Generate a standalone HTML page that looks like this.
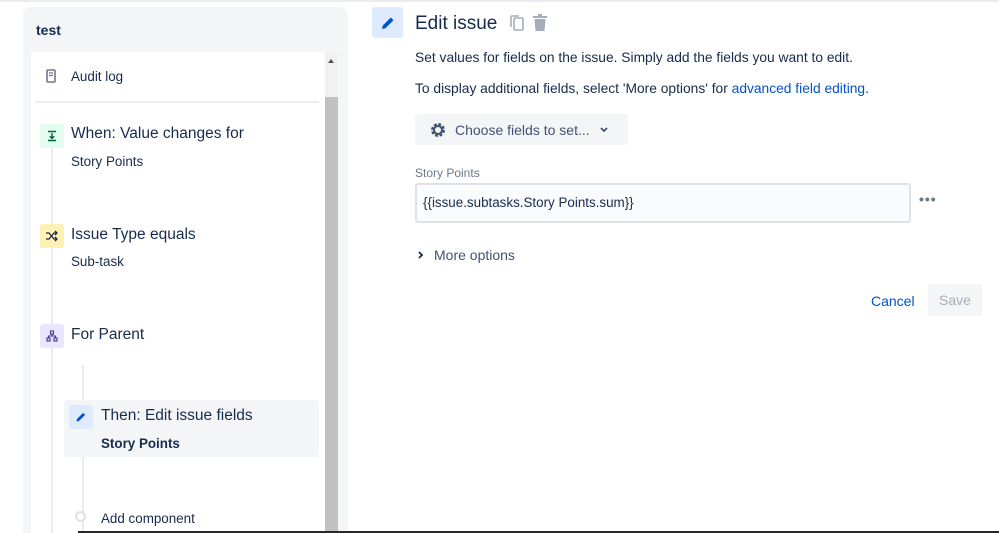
<!DOCTYPE html>
<html style="width:999px;height:533px;overflow:hidden"><head><meta charset="utf-8"><style>
*{box-sizing:border-box;margin:0;padding:0}
body{width:999px;height:533px;overflow:hidden;background:#fff;font-family:"Liberation Sans",sans-serif;color:#172b4d;position:relative}
.a{position:absolute}
.ic{position:absolute;width:24px;height:24px;border-radius:3px;display:flex;align-items:center;justify-content:center}
.t{position:absolute;font-size:15.5px;color:#172b4d}
.s{position:absolute;font-size:13.4px;color:#172b4d}
</style></head><body>
<div class="a" style="left:0;top:0;width:999px;height:2px;background:#ebecf0"></div>
<div class="a" style="left:23px;top:7px;width:325px;height:540px;background:#f4f5f7;border-radius:8px"></div>
<div class="a" style="left:36px;top:22px;font-size:14px;font-weight:bold">test</div>
<div class="a" style="left:31px;top:52px;width:294px;height:490px;background:#fff"></div>
<div class="a" style="left:325px;top:52px;width:13px;height:490px;background:#f1f1f1"></div>
<div class="a" style="left:325px;top:97px;width:13px;height:440px;background:#c1c1c1"></div>
<div class="a" style="left:328px;top:59px;width:0;height:0;border-left:3.5px solid transparent;border-right:3.5px solid transparent;border-bottom:4px solid #505050"></div>
<svg class="a" style="left:46px;top:69px" width="10" height="14" viewBox="0 0 10 14"><rect x="1" y="1" width="8" height="12" rx="1" fill="none" stroke="#6b778c" stroke-width="1.6"/><path d="M3 4h4M3 6.5h4" stroke="#6b778c" stroke-width="1.2"/></svg>
<div class="s" style="left:71px;top:69px">Audit log</div>
<div class="a" style="left:35px;top:101px;width:284px;height:2px;background:#ebecf0"></div>
<div class="a" style="left:51px;top:148px;width:2px;height:390px;background:#ebecf0"></div>
<div class="a" style="left:82px;top:365px;width:2px;height:170px;background:#ebecf0"></div>
<div class="ic" style="left:40px;top:124px;background:#e3fcef"><svg width="12" height="12" viewBox="0 0 12 12"><path d="M2 1.5h8M2 10.5h8M6 3v5.5M3.8 6.3L6 8.5l2.2-2.2" stroke="#006644" stroke-width="1.4" fill="none"/></svg></div>
<div class="t" style="left:71px;top:125px">When: Value changes for</div>
<div class="s" style="left:71px;top:154px">Story Points</div>
<div class="ic" style="left:40px;top:224px;background:#fff0b3"><svg width="14" height="12" viewBox="0 0 14 12"><path d="M1 3h3l5 6h3M1 9h3l5-6h3M10 1l2 2-2 2M10 7l2 2-2 2" stroke="#172b4d" stroke-width="1.3" fill="none"/></svg></div>
<div class="t" style="left:71px;top:226px">Issue Type equals</div>
<div class="s" style="left:71px;top:254px">Sub-task</div>
<div class="ic" style="left:40px;top:324px;background:#eae6ff"><svg width="12" height="12" viewBox="0 0 12 12"><rect x="4.5" y="1" width="3" height="3" fill="none" stroke="#403294" stroke-width="1.1"/><rect x="1" y="8" width="3" height="3" fill="none" stroke="#403294" stroke-width="1.1"/><rect x="8" y="8" width="3" height="3" fill="none" stroke="#403294" stroke-width="1.1"/><path d="M6 4v2M2.5 8V6h7v2" stroke="#403294" stroke-width="1.1" fill="none"/></svg></div>
<div class="t" style="left:71px;top:326px">For Parent</div>
<div class="a" style="left:64px;top:400px;width:255px;height:57px;background:#f4f5f7;border-radius:3px"></div>
<div class="ic" style="left:69px;top:405px;background:#deebff"><svg width="12" height="12" viewBox="0 0 12 12"><path d="M1.5 10.5l.6-2.6 6-6 2 2-6 6z" fill="#0052cc"/></svg></div>
<div class="t" style="left:101px;top:407px">Then: Edit issue fields</div>
<div class="s" style="left:101px;top:436px;font-weight:bold">Story Points</div>
<div class="a" style="left:75px;top:511px;width:11px;height:11px;border:2px solid #dfe1e6;border-radius:50%;background:#fff"></div>
<div class="s" style="left:101px;top:511px">Add component</div>
<div class="a" style="left:78px;top:531px;width:921px;height:2px;background:#202a30"></div>
<div class="ic" style="left:372px;top:7px;width:31px;height:31px;background:#deebff"><svg width="16" height="16" viewBox="0 0 12 12"><path d="M1.5 10.5l.6-2.6 6-6 2 2-6 6z" fill="#0052cc"/></svg></div>
<div class="a" style="left:415px;top:13px;font-size:19px;color:#172b4d">Edit issue</div>
<svg class="a" style="left:509px;top:14px" width="16" height="18" viewBox="0 0 16 18"><rect x="5" y="4" width="9" height="12" rx="1" fill="none" stroke="#a5adba" stroke-width="1.6"/><path d="M2 13V3a1 1 0 011-1h7" fill="none" stroke="#a5adba" stroke-width="1.6"/></svg>
<svg class="a" style="left:532px;top:14px" width="16" height="18" viewBox="0 0 16 18"><path d="M1 3h14M6 1h4" stroke="#a5adba" stroke-width="2"/><path d="M2.5 5h11l-1 12h-9z" fill="#a5adba"/></svg>
<div class="s" style="left:415px;top:50px;font-size:13.8px">Set values for fields on the issue. Simply add the fields you want to edit.</div>
<div class="s" style="left:415px;top:81px;font-size:13.8px">To display additional fields, select 'More options' for <span style="color:#0052cc">advanced field editing</span>.</div>
<div class="a" style="left:415px;top:114px;width:213px;height:31px;background:#f4f5f7;border-radius:3px"></div>
<svg class="a" style="left:429px;top:121px" width="18" height="18" viewBox="0 0 18 18"><circle cx="9" cy="9" r="5.2" fill="none" stroke="#42526e" stroke-width="3.5" stroke-dasharray="2.6 1.5"/><circle cx="9" cy="9" r="4" fill="none" stroke="#42526e" stroke-width="2"/></svg>
<div class="s" style="left:455px;top:122px;color:#42526e;font-size:14px">Choose fields to set...</div>
<svg class="a" style="left:599px;top:126px" width="10" height="8" viewBox="0 0 10 8"><path d="M2 2l3 3 3-3" stroke="#42526e" stroke-width="1.8" fill="none"/></svg>
<div class="a" style="left:415px;top:166px;font-size:12px;color:#6b778c">Story Points</div>
<div class="a" style="left:415px;top:183px;width:496px;height:40px;background:#fafbfc;border:2px solid #dfe1e6;border-radius:3px"></div>
<div class="s" style="left:423px;top:195px">{{issue.subtasks.Story Points.sum}}</div>
<div class="a" style="left:919px;top:191px;font-size:14px;color:#6b778c;letter-spacing:1px;font-weight:bold">•••</div>
<svg class="a" style="left:417px;top:250px" width="8" height="10" viewBox="0 0 8 10"><path d="M2 2l3 3-3 3" stroke="#172b4d" stroke-width="1.8" fill="none"/></svg>
<div class="s" style="left:434px;top:247px;font-size:14px;color:#42526e">More options</div>
<div class="s" style="left:871px;top:293px;color:#0052cc;font-size:14px">Cancel</div>
<div class="a" style="left:928px;top:284px;width:54px;height:32px;background:#f4f5f7;border-radius:3px;color:#a5adba;font-size:14px;text-align:center;line-height:32px">Save</div>
</body></html>
